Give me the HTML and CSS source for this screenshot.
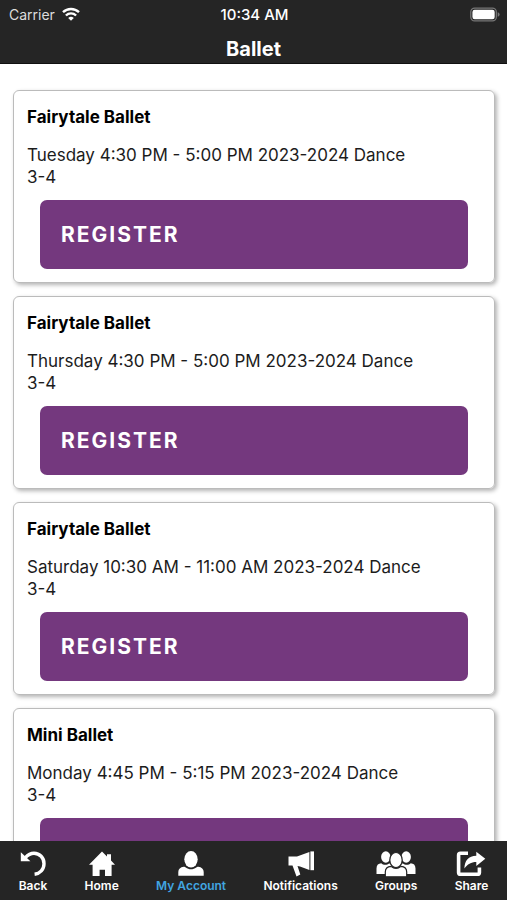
FILE: index.html
```html
<!DOCTYPE html>
<html lang="en">
<head>
<meta charset="utf-8">
<meta name="viewport" content="width=device-width, initial-scale=1">
<title>Ballet</title>
<link rel="stylesheet" href="styles.css">
</head>
<body>
<header class="top">
  <div class="status">
    <div class="carrier">
      <span>Carrier</span>
      <svg class="wifi" viewBox="0 0 18 14" aria-hidden="true">
        <g fill="none" stroke="#fff" stroke-width="2.4">
          <path d="M1 5.2a11.5 11.5 0 0 1 16 0"/>
          <path d="M3.9 8.5a7.3 7.3 0 0 1 10.2 0"/>
        </g>
        <path fill="#fff" d="M6.2 10.9a4.2 4.2 0 0 1 5.6 0L9 13.8z"/>
      </svg>
    </div>
    <time class="clock">10:34 AM</time>
    <svg class="battery" viewBox="0 0 31 15" aria-hidden="true">
      <rect x=".8" y=".8" width="26.400" height="13.400" rx="4" fill="none" stroke="#777" stroke-width="1.300"/>
      <rect x="2.500" y="2.500" width="23" height="10" rx="2.300" fill="#fff"/>
      <path d="M28.600 5.200q2 .6 2 2.300t-2 2.300z" fill="#777"/>
    </svg>
  </div>
  <h1 class="title">Ballet</h1>
</header>

<main class="list">
  <article class="card">
    <h2 class="name">Fairytale Ballet</h2>
    <p class="info">Tuesday 4:30 PM - 5:00 PM 2023-2024 Dance<br>3-4</p>
    <button class="register" type="button">REGISTER</button>
  </article>
  <article class="card">
    <h2 class="name">Fairytale Ballet</h2>
    <p class="info">Thursday 4:30 PM - 5:00 PM 2023-2024 Dance<br>3-4</p>
    <button class="register" type="button">REGISTER</button>
  </article>
  <article class="card">
    <h2 class="name">Fairytale Ballet</h2>
    <p class="info">Saturday 10:30 AM - 11:00 AM 2023-2024 Dance<br>3-4</p>
    <button class="register" type="button">REGISTER</button>
  </article>
  <article class="card">
    <h2 class="name">Mini Ballet</h2>
    <p class="info">Monday 4:45 PM - 5:15 PM 2023-2024 Dance<br>3-4</p>
    <button class="register" type="button">REGISTER</button>
  </article>
</main>

<nav class="tabs">
  <a class="tab" href="#back">
    <svg width="26" height="26" viewBox="0 0 26 26" aria-hidden="true">
      <path d="M5.500 6.500C8 3.600 11 2.200 14 2.200A10 10.200 0 0 1 24 12.700C24 18.500 20 22.600 14.600 23.200" fill="none" stroke="#fff" stroke-width="3.400"/>
      <path d="M.8 1.200V10.200H10.400z" fill="#fff"/>
    </svg>
    <span>Back</span>
  </a>
  <a class="tab" href="#home">
    <svg width="26" height="26" viewBox="0 0 26 26" aria-hidden="true">
      <path d="M13 .6L18 5.600V3.200H22V9.600L26 13.700H22.600V25H16V18.800H10.600V25H3.600V13.700H0z" fill="#fff"/>
    </svg>
    <span>Home</span>
  </a>
  <a class="tab active" href="#account" aria-current="page">
    <svg width="26" height="26" viewBox="0 0 26 26" aria-hidden="true">
      <ellipse cx="13" cy="8.300" rx="6.700" ry="8.300" fill="#fff"/>
      <path d="M.3 24.800V21c0-3 2-5 5.500-5.300 1 0 1.300.2 2 .8 3 2.400 7.400 2.400 10.400 0 .7-.6 1-.8 2-.8 3.500.3 5.500 2.300 5.500 5.300v3.800z" fill="#fff"/>
    </svg>
    <span>My Account</span>
  </a>
  <a class="tab" href="#notifications">
    <svg width="28" height="26" viewBox="0 0 28 26" aria-hidden="true">
      <path d="M1.500 5.500H10L22.400 1V19L13 15.600l-2.500-.5 2.800 8.400-3.800 2L5.500 14.600h-4z" fill="#fff"/>
      <path d="M23.400.4H27V19.200H23.400z" fill="#fff"/>
    </svg>
    <span>Notifications</span>
  </a>
  <a class="tab" href="#groups">
    <svg width="40" height="26" viewBox="0 0 40 26" aria-hidden="true">
      <g fill="#fff">
        <ellipse cx="9.800" cy="6" rx="4.700" ry="5.800"/>
        <ellipse cx="30.200" cy="6" rx="4.700" ry="5.800"/>
        <path d="M.5 23v-5.500c0-3.500 2-5.200 4.800-5.300 2 2 5.500 2.200 8 0l3 3-4.500 2.800L9 23zM39.500 23v-5.500c0-3.500-2-5.200-4.800-5.300-2 2-5.500 2.200-8 0l-3 3 4.500 2.800L31 23z"/>
      </g>
      <g fill="#fff" stroke="#252525" stroke-width="1.200">
        <ellipse cx="20" cy="9" rx="6.200" ry="7.500"/>
        <path d="M9.300 25.800V21c0-3.400 2.200-5.300 5.700-5.600 3 2.500 7 2.500 10 0 3.500.3 5.700 2.200 5.700 5.600v4.800z"/>
      </g>
    </svg>
    <span>Groups</span>
  </a>
  <a class="tab" href="#share">
    <svg width="30" height="26" viewBox="0 0 30 26" aria-hidden="true">
      <path d="M12 2.300H4.500Q2.600 2.300 2.600 4.200V21.400Q2.600 23.300 4.500 23.300H21.500Q23.400 23.300 23.400 21.400V16.500" fill="none" stroke="#fff" stroke-width="3.600"/>
      <path d="M20.300.8L29.300 7.800 20.300 15V11C15 11 11.500 13.200 8.400 17.600 8.500 9.500 12.500 5.200 20.300 4.800z" fill="#fff"/>
    </svg>
    <span>Share</span>
  </a>
</nav>
</body>
</html>
```
FILE: styles.css
```css
* {
  box-sizing: border-box;
}

body {
  margin: 0;
  height: 100vh;
  display: flex;
  flex-direction: column;
  background: #fff;
  color: #000;
  font-family: Inter, "Liberation Sans", sans-serif;
}

.top {
  flex: none;
  background: #252525;
  border-bottom: 1px solid #111;
  color: #fff;
}

.status {
  display: grid;
  grid-template-columns: 1fr auto 1fr;
  align-items: center;
  height: 28px;
  padding: 0 7px 0 9px;
  font-size: 14px;
}

.carrier {
  display: flex;
  align-items: center;
  gap: 7px;
  color: #ddd;
}

.wifi {
  width: 18px;
  height: 14px;
}

.clock {
  font-size: 15px;
  font-weight: 500;
}

.battery {
  width: 30px;
  height: 15px;
  justify-self: end;
}

.title {
  margin: 0;
  padding-top: 7px;
  font-size: 20px;
  line-height: 28px;
  font-weight: 700;
  text-align: center;
}

.list {
  flex: 1;
  min-height: 0;
  overflow: hidden;
  display: flex;
  flex-direction: column;
  gap: 13px;
  padding: 26px 12px 0 13px;
}

.card {
  flex: none;
  padding: 15px 26px 13px 13px;
  border: 1px solid #bbb;
  border-radius: 6px;
  box-shadow: 2px 2px 4px rgba(0, 0, 0, 0.3);
}

.name {
  margin: 0 0 16px;
  font-size: 17px;
  line-height: 22px;
  font-weight: 700;
}

.info {
  margin: 0 0 12px;
  color: #1c1c1c;
  font-size: 17px;
  line-height: 22px;
}

.register {
  display: block;
  width: calc(100% - 13px);
  height: 69px;
  margin-left: 13px;
  padding: 0 21px;
  border: 0;
  border-radius: 7px;
  background: #74387e;
  color: #fff;
  font-family: inherit;
  font-size: 21px;
  font-weight: 700;
  letter-spacing: 2px;
  text-align: left;
}

.tabs {
  flex: none;
  display: flex;
  justify-content: space-around;
  height: 59px;
  padding-top: 10px;
  background: #252525;
}

.tab {
  display: flex;
  flex-direction: column;
  align-items: center;
  color: #fff;
  font-size: 12px;
  line-height: 18px;
  font-weight: 600;
  text-decoration: none;
}

.active {
  color: #41a5e1;
}
```
